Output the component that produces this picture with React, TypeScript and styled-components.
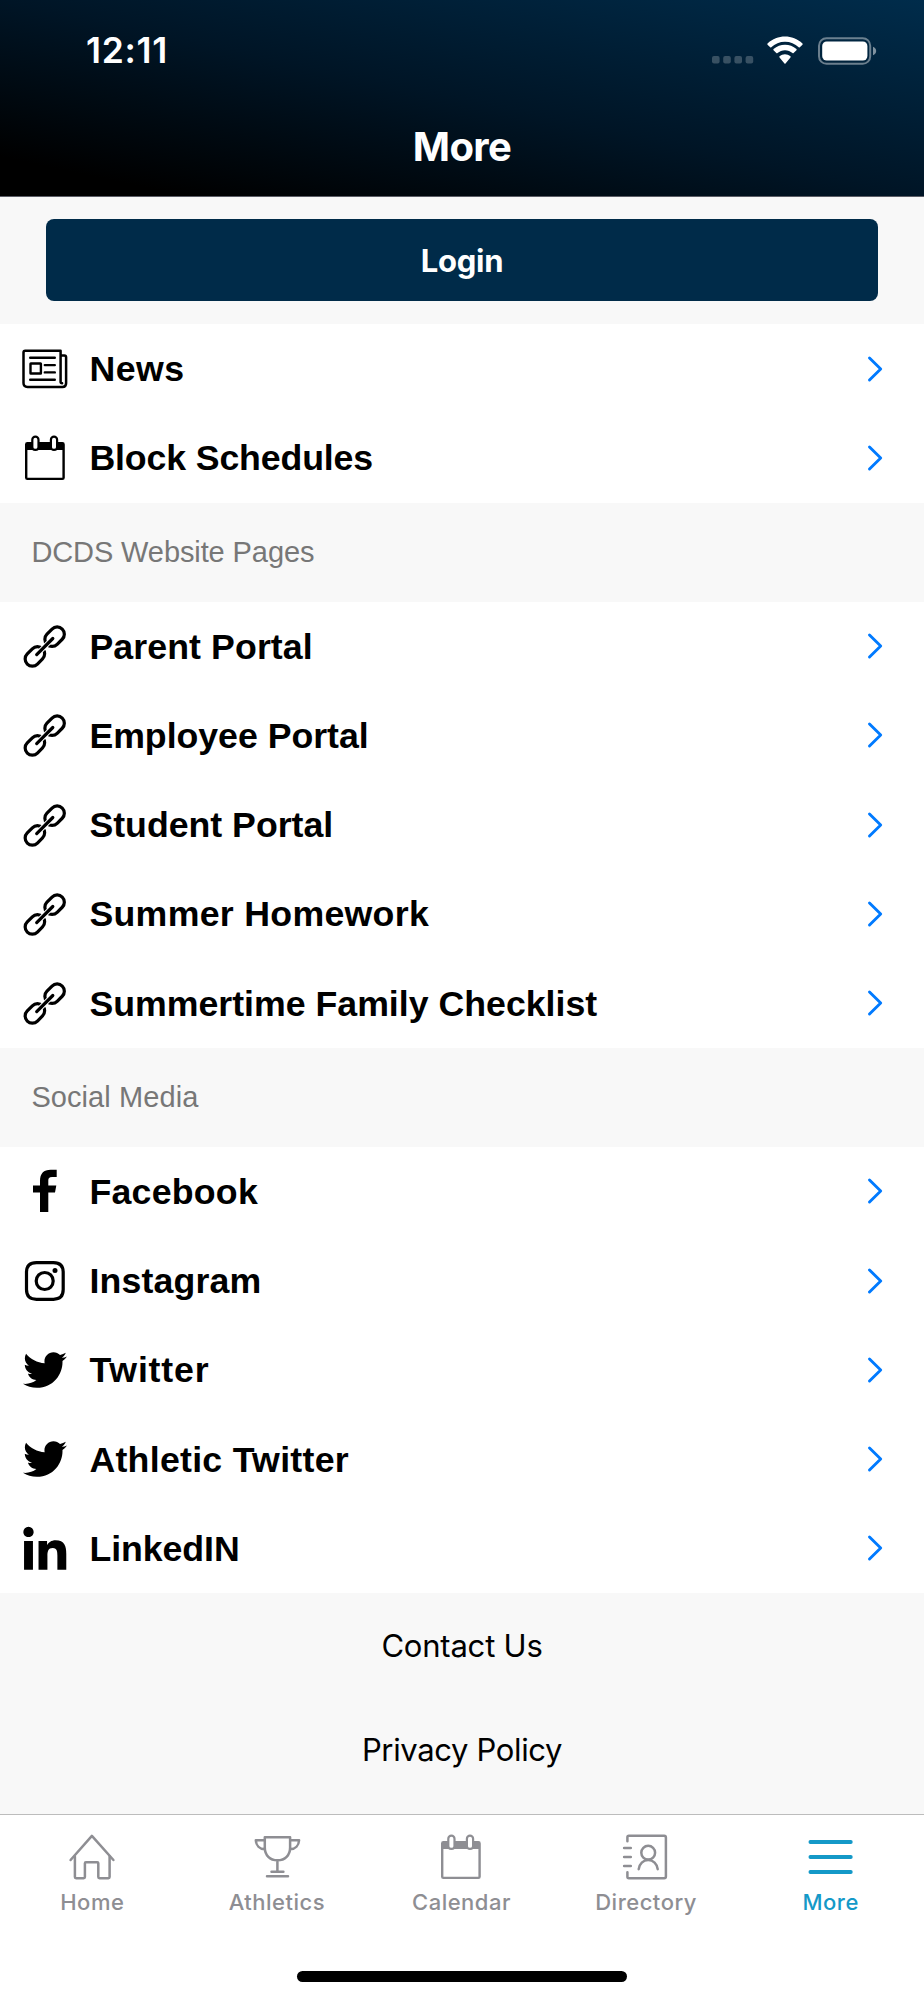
import React from "react";
import styled, { createGlobalStyle } from "styled-components";
import { FaTwitter } from "react-icons/fa";

const GlobalStyle = createGlobalStyle`
  *, *::before, *::after { box-sizing: border-box; }
  body { margin: 0; background: #fff; }
`;

const ui = `Inter, "Liberation Sans", sans-serif`;
const helvetica = `"Liberation Sans", Arial, sans-serif`;

const Screen = styled.div`
  display: flex;
  flex-direction: column;
  width: 924px;
  height: 2000px;
  overflow: hidden;
  background: #f8f8f8;
  font-family: ${ui};
`;

const Header = styled.header`
  display: flex;
  flex-direction: column;
  flex: none;
  height: 197px;
  border-bottom: 1px solid #5b5d66;
  background: linear-gradient(to top right, #000 10%, #001526 50%, #002c4b 100%);
  color: #fff;
`;

const StatusBar = styled.div`
  display: flex;
  align-items: center;
  justify-content: space-between;
  height: 101px;
  padding: 0 47px 0 86px;
`;

const Clock = styled.span`
  font-size: 35.5px;
  font-weight: 600;
  line-height: 44px;
  letter-spacing: 0.7px;
`;

const StatusIcons = styled.div`
  display: flex;
  align-items: center;
  height: 30px;
`;

const Title = styled.h1`
  margin: 0;
  padding-top: 21px;
  font-size: 40px;
  font-weight: 700;
  line-height: 50px;
  letter-spacing: -0.6px;
  text-align: center;
`;

const LoginArea = styled.div`
  flex: none;
  height: 127px;
  padding: 21.7px 46px 0;
`;

const LoginButton = styled.button`
  display: block;
  width: 100%;
  height: 82.6px;
  padding: 2px 0 0;
  border: 0;
  border-radius: 8px;
  background: #002b49;
  color: #fff;
  font-family: ${ui};
  font-size: 31px;
  font-weight: 700;
  letter-spacing: -0.3px;
`;

const List = styled.nav`
  flex: none;
  background: #fff;
`;

const Row = styled.a`
  display: flex;
  align-items: center;
  height: 89.25px;
  padding: 0 41px 0 22px;
  color: #000;
`;

const RowIcon = styled.svg`
  flex: none;
  width: 46px;
  height: 46px;
  overflow: visible;
`;

const RowLabel = styled.span<{ $spacing?: number }>`
  flex: 1;
  margin-left: 21.4px;
  padding-top: 1px;
  font-family: ${helvetica};
  font-size: 35.7px;
  font-weight: 700;
  line-height: 44px;
  letter-spacing: ${(p) => p.$spacing ?? 0}px;
  white-space: nowrap;
`;

const SectionTitle = styled.h2<{ $spacing: number }>`
  display: flex;
  align-items: center;
  flex: none;
  height: 99px;
  margin: 0;
  padding: 1px 0 0 31.4px;
  color: #777;
  font-family: ${helvetica};
  font-size: 29px;
  font-weight: 400;
  letter-spacing: ${(p) => p.$spacing}px;
`;

const Footer = styled.div`
  display: flex;
  flex-direction: column;
  flex: 1;
`;

const FooterLink = styled.a<{ $spacing: number }>`
  display: flex;
  align-items: center;
  justify-content: center;
  height: 104.600px;
  color: #000;
  font-size: 31px;
  letter-spacing: ${(p) => p.$spacing}px;
`;

const TabBar = styled.nav`
  display: flex;
  flex-direction: column;
  flex: none;
  height: 186px;
  border-top: 1px solid #bcbcbc;
  background: #fff;
`;

const Tabs = styled.div`
  display: grid;
  grid-template-columns: repeat(5, 1fr);
  height: 156px;
  padding-right: 1px;
`;

const Tab = styled.a<{ $active?: boolean }>`
  display: flex;
  flex-direction: column;
  align-items: center;
  padding-top: 19px;
  color: ${(p) => (p.$active ? "#1499c8" : "#8e8e93")};
`;

const TabLabel = styled.span`
  margin-top: 8px;
  font-size: 22px;
  font-weight: 500;
  line-height: 28px;
  letter-spacing: 0.5px;
`;

const HomeIndicator = styled.div`
  align-self: center;
  width: 330px;
  height: 11px;
  border-radius: 6px;
  background: #000;
`;

const line = {
  fill: "none",
  stroke: "currentColor",
  strokeLinecap: "round",
  strokeLinejoin: "round",
} as const;

const CellularDots = () => (
  <svg width="42" height="30" viewBox="0 0 42 30" fill="#fff" fillOpacity=".22">
    {[0, 11.2, 22.4, 33.6].map((x) => (
      <rect key={x} x={x} y="20" width="7.6" height="7.6" rx="2" />
    ))}
  </svg>
);

const WifiGlyph = styled.svg`
  margin: 0 15.2px 0 13px;
`;

const Wifi = () => (
  <WifiGlyph width="36" height="30" viewBox="1.200 1.100 33.600 28" fill="#fff">
    <path d="M18 6.5c4.900 0 9.400 1.900 12.800 5.200.3.300.7.300 1 0l2.500-2.500c.3-.3.3-.8 0-1.100C25.200-.6 10.800-.6 1.700 8.100c-.3.300-.3.800 0 1.100l2.500 2.500c.3.300.7.300 1 0C8.600 8.400 13.100 6.500 18 6.500z" />
    <path d="M18 14.300c2.600 0 5.100 1 7 2.700.3.300.7.300 1 0l2.700-2.600c.3-.3.3-.8 0-1.100-6-5.500-15.300-5.500-21.400 0-.3.300-.3.800 0 1.100l2.600 2.600c.3.300.8.300 1.100 0 1.900-1.700 4.400-2.700 7-2.700z" />
    <path d="M23.100 21.100c.3-.3.3-.8 0-1.100-3-2.500-7.300-2.500-10.200 0-.3.300-.3.800 0 1.100l4.600 5.600c.3.300.7.300 1 0z" />
  </WifiGlyph>
);

const Battery = () => (
  <svg width="59" height="30" viewBox="0 0 59 30">
    <rect x="1" y="2.2" width="51.200" height="25.600" rx="7.500" fill="none" stroke="#fff" strokeOpacity=".42" strokeWidth="2" />
    <rect x="4.200" y="5.500" width="45.200" height="19" rx="4.500" fill="#fff" />
    <path d="M55 10.700c2 .7 3.200 2.400 3.200 4.300s-1.200 3.600-3.200 4.300z" fill="#fff" fillOpacity=".5" />
  </svg>
);

const NewsIcon = () => (
  <RowIcon viewBox="0 0 46 46" {...line} strokeWidth="2.5">
    <path d="M38.600 36V4.800H3.200C2 4.800 1.500 5.400 1.500 6.600V37c0 2.500 1.500 3.900 4 3.900h35c2.200 0 3.600-1.500 3.600-3.700V11.200c0-1-.7-1.700-1.700-1.700H38.600M38.600 36c0 .8.400 1.200 1.500 1.200" />
    <path d="M8.200 11.700h24.600M22.800 19.100h10M22.800 26.400h10M8.200 33.700h24.600" strokeWidth="2.400" />
    <rect x="8.500" y="17.500" width="10.400" height="10" rx=".3" strokeWidth="2.400" />
  </RowIcon>
);

const CalendarIcon = () => (
  <RowIcon viewBox="0 0 46 46" {...line} strokeWidth="2.400">
    <rect x="4.200" y="8.300" width="37.400" height="35.600" rx="1.200" />
    <path d="M4 8.200h37.800v6.900H4z" fill="currentColor" stroke="none" />
    <path d="M10.300 12.300V4.700a3.100 3.100 0 0 1 6.200 0v7.600a3.100 2.600 0 0 1-6.200 0zM28.900 12.300V4.700a3.100 3.100 0 0 1 6.200 0v7.600a3.100 2.600 0 0 1-6.200 0z" fill="#fff" strokeWidth="2.200" />
  </RowIcon>
);

const LinkIcon = () => (
  <RowIcon viewBox="0 0 46 46" {...line} strokeWidth="3.200">
    <rect x="-10.800" y="-7.200" width="21.600" height="14.400" rx="7.200" transform="translate(32.600 13.700) rotate(-45)" />
    <rect x="-10.800" y="-7.200" width="21.600" height="14.400" rx="7.200" transform="translate(12.900 33.400) rotate(-45)" />
    <path d="M17 29.300 28.400 17.900" stroke="#fff" strokeWidth="5.200" strokeLinecap="butt" />
    <path d="M14.700 31.600 30.800 15.500" strokeWidth="3.200" />
  </RowIcon>
);

const FacebookIcon = () => (
  <RowIcon viewBox="0 0 46 46" fill="currentColor">
    <path d="M18 44V24.400h-7v-7h7V13C18 5.500 21.600 1.700 28.700 1.700h6V9h-4.600c-3 0-3.800 1.200-3.800 3.600v4.800h8l-1.300 7h-6.700V44z" />
  </RowIcon>
);

const InstagramIcon = () => (
  <RowIcon viewBox="0 0 46 46" {...line} strokeWidth="3.200">
    <path d="M14.500 4.700h17c6.700 0 9.700 3.200 9.700 9.700v17.200c0 6.500-3 9.700-9.700 9.700h-17c-6.700 0-10-3.200-10-9.700V14.400c0-6.500 3.300-9.700 10-9.700z" />
    <circle cx="22.700" cy="23" r="8.500" />
    <circle cx="33" cy="12.600" r="2.500" fill="currentColor" stroke="none" />
  </RowIcon>
);

const TwitterGlyph = styled(FaTwitter)`
  flex: none;
  width: 46px;
  height: 46px;
  padding: 1px;
`;

const TwitterIcon = () => <TwitterGlyph />;

const LinkedInIcon = () => (
  <RowIcon viewBox="-14 -18 480 480" fill="currentColor">
    <path d="M100.280 448H7.400V148.900h92.880zM53.790 108.100C24.090 108.100 0 83.500 0 53.800a53.790 53.790 0 0 1 107.580 0c0 29.700-24.100 54.300-53.790 54.300zM447.900 448h-92.680V302.400c0-34.700-.7-79.200-48.290-79.200-48.290 0-55.690 37.700-55.690 76.700V448h-92.780V148.900h89.080v40.800h1.300c12.400-23.500 42.690-48.300 87.880-48.300 94 0 111.280 61.900 111.280 142.300V448z" />
  </RowIcon>
);

const HomeIcon = () => (
  <RowIcon viewBox="0 0 46 46" {...line} strokeWidth="2.500">
    <path d="M1.600 26 22.900 1.900 44.400 26" />
    <path d="M5.900 22.500V43c0 .8.400 1.200 1.200 1.200h7.600c.8 0 1.200-.4 1.200-1.200V29.300c0-.7.400-1 1-1h11.400c.6 0 1 .3 1 1V43c0 .8.400 1.200 1.200 1.200h8.900c.8 0 1.200-.4 1.200-1.200V22.500" />
  </RowIcon>
);

const TrophyIcon = () => (
  <RowIcon viewBox="0 0 46 46" {...line} strokeWidth="2.500">
    <path d="M10.800 3.300h25.300v10.200c0 7.800-5 12.800-12.600 12.800s-12.700-5-12.700-12.800zM10.800 6.300h-9c.3 5 3.700 8.800 9 9M36.100 6.300h9c-.3 5-3.700 8.800-9 9M23.400 26.300v11.400M17.500 37.700h11.900M13 42.300h21" />
  </RowIcon>
);

const DirectoryIcon = () => (
  <RowIcon viewBox="-0.700 0 46 46" {...line} strokeWidth="2.500">
    <path d="M3.700 7.300V3.200c0-1 .5-1.500 1.500-1.500h35.300c1.100 0 1.700.6 1.700 1.700v39.200c0 1.100-.6 1.700-1.700 1.700H5.200c-1 0-1.500-.5-1.500-1.500v-4.500M.4 14h6.700M.4 23h6.700M.4 32h6.700" />
    <circle cx="24.500" cy="18.700" r="6.900" />
    <path d="M15 35.200c.6-5.500 4.500-9.100 9.500-9.100s8.900 3.600 9.500 9.100" />
  </RowIcon>
);

const MenuIcon = () => (
  <RowIcon viewBox="-0.400 0 46 46" {...line} strokeWidth="3.800">
    <path d="M2 8h40.400M2 23h40.400M2 38h40.400" />
  </RowIcon>
);

const Chevron = () => (
  <svg width="16" height="28" viewBox="0 0 16 28" fill="none" stroke="#007aff" strokeWidth="2.900" strokeLinecap="round" strokeLinejoin="round">
    <path d="M2.500 3 13.700 14 2.500 25" />
  </svg>
);

type Item = { label: string; Icon: React.ComponentType; spacing?: number };

const general: Item[] = [
  { label: "News", Icon: NewsIcon, spacing: 0.5 },
  { label: "Block Schedules", Icon: CalendarIcon, spacing: -0.13 },
];

const pages: Item[] = [
  { label: "Parent Portal", Icon: LinkIcon, spacing: 0.1 },
  { label: "Employee Portal", Icon: LinkIcon, spacing: -0.03 },
  { label: "Student Portal", Icon: LinkIcon },
  { label: "Summer Homework", Icon: LinkIcon, spacing: 0.3 },
  { label: "Summertime Family Checklist", Icon: LinkIcon },
];

const social: Item[] = [
  { label: "Facebook", Icon: FacebookIcon, spacing: 0.25 },
  { label: "Instagram", Icon: InstagramIcon, spacing: 0.15 },
  { label: "Twitter", Icon: TwitterIcon, spacing: 0.8 },
  { label: "Athletic Twitter", Icon: TwitterIcon, spacing: 0.28 },
  { label: "LinkedIN", Icon: LinkedInIcon, spacing: -0.05 },
];

const tabs: (Item & { active?: boolean })[] = [
  { label: "Home", Icon: HomeIcon },
  { label: "Athletics", Icon: TrophyIcon },
  { label: "Calendar", Icon: CalendarIcon },
  { label: "Directory", Icon: DirectoryIcon },
  { label: "More", Icon: MenuIcon, active: true },
];

const LinkList = ({ items }: { items: Item[] }) => (
  <List>
    {items.map(({ label, Icon, spacing }) => (
      <Row key={label}>
        <Icon />
        <RowLabel $spacing={spacing}>{label}</RowLabel>
        <Chevron />
      </Row>
    ))}
  </List>
);

export default function App() {
  return (
    <Screen>
      <GlobalStyle />
      <Header>
        <StatusBar>
          <Clock>12:11</Clock>
          <StatusIcons>
            <CellularDots />
            <Wifi />
            <Battery />
          </StatusIcons>
        </StatusBar>
        <Title>More</Title>
      </Header>
      <LoginArea>
        <LoginButton>Login</LoginButton>
      </LoginArea>
      <LinkList items={general} />
      <SectionTitle $spacing={-0.1}>DCDS Website Pages</SectionTitle>
      <LinkList items={pages} />
      <SectionTitle $spacing={0.08}>Social Media</SectionTitle>
      <LinkList items={social} />
      <Footer>
        <FooterLink $spacing={-0.2}>Contact Us</FooterLink>
        <FooterLink $spacing={-0.35}>Privacy Policy</FooterLink>
      </Footer>
      <TabBar>
        <Tabs>
          {tabs.map(({ label, Icon, active }) => (
            <Tab key={label} $active={active}>
              <Icon />
              <TabLabel>{label}</TabLabel>
            </Tab>
          ))}
        </Tabs>
        <HomeIndicator />
      </TabBar>
    </Screen>
  );
}
